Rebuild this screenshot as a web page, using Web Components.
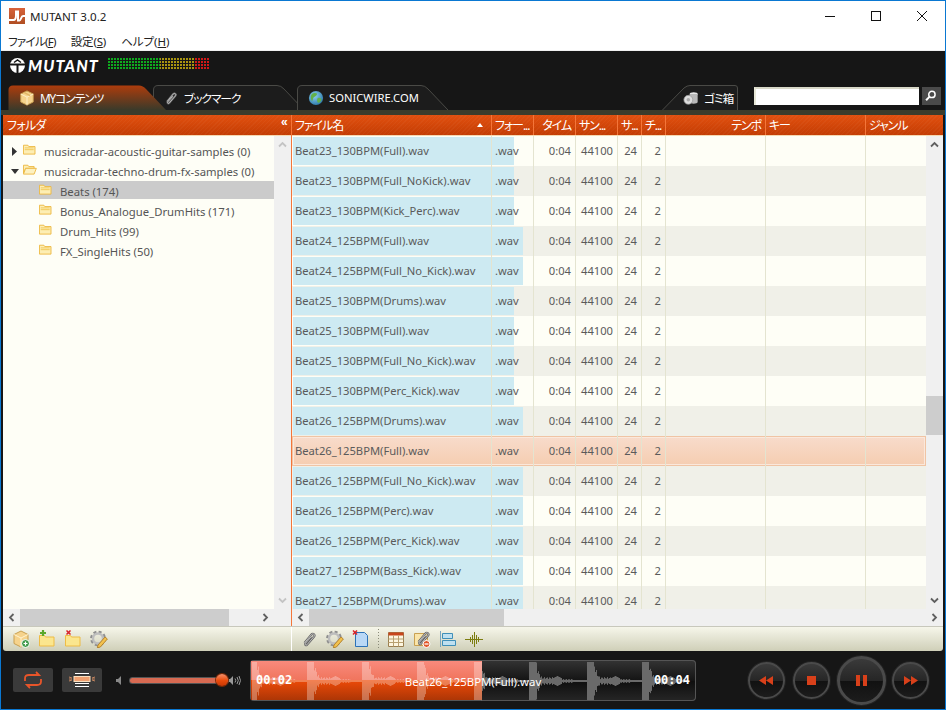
<!DOCTYPE html>
<html lang="ja">
<head>
<meta charset="utf-8">
<title>MUTANT 3.0.2</title>
<style>
  html, body { margin: 0; padding: 0; background: #161616; }
  body { font-family: "Noto Sans", "Noto Sans CJK JP", sans-serif; }
</style>
</head>
<body>
<mu-app></mu-app>
<script>
const FONT = `"Noto Sans", "Noto Sans CJK JP", sans-serif`;
// the kana in the reference are narrow, so squeeze them
const KANA = `font-feature-settings: "palt"; letter-spacing: -.7px;`;
const KANA_TIGHT = `font-feature-settings: "palt"; letter-spacing: -1.1px;`;

const FOLDER = `<path d="M.5 2.5h5l1 1.5h7v8.500H.5z" fill="#fdeeb4" stroke="#ecb63c"/><path d="M2 5.500h10M2 7.500h10" stroke="#f0c652" fill="none"/>`;
const GEAR = `<circle cx="8" cy="8.500" r="6.400" fill="none" stroke="#8e8e8e" stroke-width="3" stroke-dasharray="2.800 2.200"/><circle cx="8" cy="8.500" r="5" fill="none" stroke="#bdbdbd" stroke-width="2.400"/><path d="M8 15l7-8 2.400 2-7 8-3 .8z" fill="#f2c14e" stroke="#a8741a" stroke-width=".8"/>`;
const CLIP = `<path d="M4.500 13L11.500 4.500c1.600-1.800 4 .4 2.400 2.200L7 14.700c-1 1.100-2.600-.3-1.600-1.400l5.600-6.400" fill="none" stroke="#666" stroke-width="2.200"/><path d="M4.500 13L11.500 4.500c1.600-1.800 4 .4 2.400 2.200L7 14.700c-1 1.100-2.600-.3-1.600-1.400l5.600-6.400" fill="none" stroke="#e4e4e4" stroke-width=".7"/>`;
const ICONS = {
  box: `<path d="M9 1l7 3.500v9L9 17l-7-3.500v-9z" fill="#f6d38c" stroke="#c9a050"/><path d="M2 4.500L9 8l7-3.500M9 8v9" fill="none" stroke="#fff3d0"/><path d="M5.500 2.800l7 3.500" stroke="#e0b566" stroke-width="1.600"/>`,
  clip: CLIP,
  globe: `<defs><radialGradient id="g" cx=".4" cy=".35" r=".7"><stop offset="0" stop-color="#8fd0f0"/><stop offset="1" stop-color="#2a78a8"/></radialGradient></defs><circle cx="9" cy="9" r="8" fill="url(#g)"/><path d="M4 5c2-2 5-2 6-1s-1 3-3 4-1 3-2 4-3-4-1-7zM11 9c2-1 4 0 4 2s-3 4-4 3-1-4 0-5z" fill="#62b04a"/>`,
  trash: `<ellipse cx="12" cy="4.500" rx="4.500" ry="2" fill="#e8e8e8"/><path d="M7.500 4.500v9c0 2.600 9 2.600 9 0v-9" fill="#b9b9b9"/><circle cx="6" cy="11" r="5" fill="#dedede" stroke="#999" stroke-width=".8"/><circle cx="6" cy="11" r="2" fill="#aaa"/>`,
  search: `<circle cx="9.500" cy="6.500" r="3.800" fill="none" stroke="#fff" stroke-width="1.800"/><path d="M6.500 9.500L2.500 13.500" stroke="#fff" stroke-width="2.400"/>`,
  folder: FOLDER,
  open: `<path d="M.5 2.500h5l1 1.500h6v2H3L.5 11.500z" fill="#fdeeb4" stroke="#ecb63c"/><path d="M3 6h12l-2.500 6.500H.5z" fill="#fdf1c0" stroke="#ecb63c"/>`,
  boxadd: `<path d="M9 1l7 3.500v9L9 17l-7-3.500v-9z" fill="#f6d38c" stroke="#c9a050"/><path d="M2 4.500L9 8l7-3.500M9 8v9" fill="none" stroke="#fff3d0"/><circle cx="13.500" cy="13.500" r="4" fill="#3f9a4a" stroke="#fff"/><path d="M11.500 13.500h4M13.500 11.500v4" stroke="#fff" stroke-width="1.200"/>`,
  folderadd: `<path d="M1.500 5.500h5l1 1.500h8.500v9H1.500z" fill="#fbe68e" stroke="#eebc45"/><path d="M5 0v6M2 3h6" stroke="#5aa82c" stroke-width="2.200"/>`,
  folderdel: `<path d="M1.500 5.500h5l1 1.500h8.500v9H1.500z" fill="#fbe68e" stroke="#eebc45"/><path d="M2.500 .5l4 4M6.500 .5l-4 4" stroke="#d8232a" stroke-width="1.500"/>`,
  gear: GEAR,
  docdel: `<path d="M3.500 2.500h9l3 3v11h-12z" fill="#b9d8f6" stroke="#2c72b8"/><path d="M1 .5l4 4M5 .5l-4 4" stroke="#d8232a" stroke-width="1.500"/>`,
  table: `<path d="M1.500 2.500h15v14h-15z" fill="#fdf6e0" stroke="#9a7f50"/><path d="M1.500 2.500h15v3h-15z" fill="#c8451c"/><path d="M1.500 9h15M1.500 12.500h15M6.500 5.500v11M11.500 5.500v11" stroke="#b8a070" fill="none"/>`,
  clipdel: `<path d="M1.500 3.500h13v12h-13z" fill="#f9e4a8" stroke="#c9a050"/><g transform="translate(1 -1)">${CLIP}</g><circle cx="13.500" cy="14" r="3.500" fill="#e2562a" stroke="#fff"/><path d="M11.500 14h4" stroke="#fff" stroke-width="1.300"/>`,
  align: `<path d="M1.500 1v16" stroke="#7aa6c0"/><path d="M3.500 3.500h10v5h-10z" fill="#bfe0f0" stroke="#3f8fb8"/><path d="M3.500 10.500h13v5h-13z" fill="#bfe0f0" stroke="#3f8fb8"/>`,
  wave: `<path d="M0 9.500h18" stroke="#7d7d10"/><path d="M5.500 7v5M7.500 5v9M9.500 2v15M11.500 5v9M13.500 7v5" stroke="#7d7d10"/>`
};

class MuIcon extends HTMLElement {
  connectedCallback() {
    const size = this.getAttribute("size") || 18;
    this.attachShadow({ mode: "open" }).innerHTML = `
      <style>:host { display: block; width: ${size}px; height: ${size}px; flex: none; } svg { display: block; }</style>
      <svg width="${size}" height="${size}" viewBox="0 0 18 18">${ICONS[this.getAttribute("name")]}</svg>`;
  }
}
customElements.define("mu-icon", MuIcon);

class MuTitlebar extends HTMLElement {
  constructor() {
    super();
    this.attachShadow({ mode: "open" }).innerHTML = `
    <style>
      :host { display: flex; align-items: center; height: 30px; background: #fff; color: #222; font: 11.600px ${FONT}; }
      .logo { margin-left: 8px; width: 16px; height: 16px; }
      .name { margin-left: 5px; flex: 1; }
      .btn { width: 46px; height: 30px; display: flex; align-items: center; justify-content: center; }
    </style>
    <svg class="logo" viewBox="0 0 16 16"><defs><linearGradient id="l" x1="0" y1="0" x2="0" y2="1"><stop offset="0" stop-color="#d8623a"/><stop offset="1" stop-color="#b04e22"/></linearGradient></defs><rect width="16" height="16" fill="url(#l)"/><path d="M0 12H4.500C6 12 7 10 7 7V3.500H9V12.500H10.500C12 12.500 12 8 14 8H16" fill="none" stroke="#fff" stroke-width="2"/></svg>
    <span class="name">MUTANT 3.0.2</span>
    <div class="btn"><svg width="10" height="10"><path d="M0 5.500h10" stroke="#111"/></svg></div>
    <div class="btn"><svg width="10" height="10"><rect x=".5" y=".5" width="9" height="9" fill="none" stroke="#111"/></svg></div>
    <div class="btn"><svg width="10" height="10"><path d="M0 0l10 10M10 0L0 10" stroke="#111"/></svg></div>`;
  }
}
customElements.define("mu-titlebar", MuTitlebar);

class MuMenubar extends HTMLElement {
  constructor() {
    super();
    this.attachShadow({ mode: "open" }).innerHTML = `
    <style>
      :host { display: flex; gap: 15px; align-items: center; height: 20px; box-sizing: border-box; padding-left: 7px; background: #fff; border-bottom: 1px solid #f0f0f0; color: #222; font: 11.500px ${FONT}; ${KANA} }
      .s { letter-spacing: -.2px; }
      .h { letter-spacing: 0; }
    </style>
    <span>ファイル(<u>F</u>)</span><span class="s">設定(<u>S</u>)</span><span class="h">ヘルプ(<u>H</u>)</span>`;
  }
}
customElements.define("mu-menubar", MuMenubar);

class MuBrand extends HTMLElement {
  constructor() {
    super();
    this.attachShadow({ mode: "open" }).innerHTML = `
    <style>
      :host { display: flex; align-items: flex-start; height: 34px; padding: 7px 0 0 9px; box-sizing: border-box; }
      svg { width: 15px; height: 15px; }
      .word { margin-left: 3px; width: 72px; color: #fff; font: italic 900 16px/15px Lato, sans-serif; letter-spacing: 1.100px; white-space: nowrap; }
      .meter { margin-left: 8px; width: 102px; height: 12px;
        background:
          repeating-linear-gradient(90deg, transparent 0 2px, #161616 2px 3px),
          repeating-linear-gradient(180deg, transparent 0 2px, #161616 2px 3px),
          linear-gradient(90deg, #0ea81e 0 52px, #a89410 52px 87px, #d01818 87px);
      }
    </style>
    <svg viewBox="0 0 15 15"><circle cx="7.500" cy="7.500" r="7.500" fill="#fff"/><path d="M0 6.500h15M7.500 6v9" stroke="#161616" stroke-width="2"/><path d="M4 4.500l3.500-2.500 3.500 2.500" stroke="#161616" stroke-width="1.500" fill="none"/></svg>
    <span class="word">MUTANT</span>
    <div class="meter"></div>`;
  }
}
customElements.define("mu-brand", MuBrand);

class MuTab extends HTMLElement {
  connectedCallback() {
    const w = +this.getAttribute("width");
    const active = this.hasAttribute("active");
    const left = this.hasAttribute("slant-left");
    const latin = this.hasAttribute("latin");
    const d = left
      ? `M.5 25L22 3Q25 .5 28 .5H${w - 3}Q${w - .5} .5 ${w - .5} 3V25`
      : `M.5 25V5Q.5 .5 5 .5H${w - 28}Q${w - 24} .5 ${w - 21} 4L${w - 1} 25`;
    this.attachShadow({ mode: "open" }).innerHTML = `
    <style>
      :host { display: flex; position: relative; align-items: center; gap: 5px; box-sizing: border-box; width: ${w}px; height: 25px; white-space: nowrap;
        padding-left: ${this.getAttribute("pad") || 11}px; color: #fff; z-index: ${active ? 3 : 1};
        ${latin ? `font: 11.200px ${FONT};` : `font: 11.800px ${FONT}; ${KANA_TIGHT}`} }
      svg { position: absolute; left: 0; top: 0; z-index: -1; }
    </style>
    <svg width="${w}" height="25">
      <defs><linearGradient id="a" x1="0" y1="0" x2="0" y2="1"><stop offset="0" stop-color="#ad3c0c"/><stop offset="1" stop-color="#3a3a2a"/></linearGradient></defs>
      <path d="${d}${active ? "Z" : ""}" fill="${active ? "url(#a)" : "#1c1c1c"}" stroke="${active ? "none" : "#4a4a46"}"/>
    </svg>
    <mu-icon name="${this.getAttribute("icon")}" size="16"></mu-icon><slot></slot>`;
  }
}
customElements.define("mu-tab", MuTab);

class MuTabs extends HTMLElement {
  constructor() {
    super();
    this.attachShadow({ mode: "open" }).innerHTML = `
    <style>
      :host { display: flex; height: 25px; padding-left: 7px; }
      .t2 { margin-left: -14px; }
      .t3 { margin-left: -8px; }
      .t4 { margin-left: auto; }
      .search { margin: 2px 0 0 16px; display: flex; gap: 3px; height: 18px; padding-right: 4px; }
      .input { width: 165px; height: 18px; box-sizing: border-box; background: #fff; border-top: 2px solid #d8d8c8; border-left: 2px solid #e8e8d8; }
      .go { width: 19px; height: 18px; background: #4a4a4a; display: flex; align-items: center; justify-content: center; }
    </style>
    <mu-tab active width="159" icon="box">MYコンテンツ</mu-tab>
    <mu-tab class="t2" width="152" icon="clip" pad="10">ブックマーク</mu-tab>
    <mu-tab class="t3" width="152" icon="globe" latin>SONICWIRE.COM</mu-tab>
    <mu-tab class="t4" slant-left width="76" icon="trash" pad="21">ゴミ箱</mu-tab>
    <div class="search">
      <div class="input"></div>
      <div class="go"><mu-icon name="search" size="15"></mu-icon></div>
    </div>`;
  }
}
customElements.define("mu-tabs", MuTabs);

class MuScrollbar extends HTMLElement {
  connectedCallback() {
    const v = this.hasAttribute("vertical");
    const chev = (dir, col) => {
      const rot = { left: 0, up: 90, right: 180, down: 270 }[dir];
      return `<svg width="9" height="9" viewBox="0 0 9 9" style="transform:rotate(${rot}deg)"><path d="M6.500 1L3 4.500 6.500 8" fill="none" stroke="${col}" stroke-width="1.800"/></svg>`;
    };
    const col = this.getAttribute("arrow") || "#606060";
    const start = +this.getAttribute("start") || 0;
    const size = +this.getAttribute("size") || 0;
    const thumb = size ? `<div class="thumb" style="${v ? `margin-top:${start}px;height:${size}px` : `margin-left:${start}px;width:${size}px`}"></div>` : "";
    this.attachShadow({ mode: "open" }).innerHTML = `
    <style>
      :host { display: flex; flex-direction: ${v ? "column" : "row"}; background: #f0f0f0; flex: none; ${v ? "width: 17px;" : "height: 17px;"} }
      .arrow { flex: none; width: 17px; height: 17px; display: flex; align-items: center; justify-content: center; }
      .track { flex: 1; display: flex; min-width: 0; min-height: 0; flex-direction: ${v ? "column" : "row"}; }
      .thumb { background: #cdcdcd; flex: none; }
      .corner { flex: none; width: ${this.getAttribute("corner") || 0}px; }
    </style>
    <div class="arrow">${chev(v ? "up" : "left", col)}</div>
    <div class="track">${thumb}</div>
    <div class="arrow">${chev(v ? "down" : "right", col)}</div>
    <div class="corner"></div>`;
  }
}
customElements.define("mu-scrollbar", MuScrollbar);

class MuHeadCell extends HTMLElement {
  constructor() {
    super();
    this.attachShadow({ mode: "open" }).innerHTML = `
    <style>
      :host { display: flex; align-items: center; box-sizing: border-box; min-width: 0; padding: 0 0 0 3px; height: 20px;
        border-right: 1px solid #f4763a; white-space: nowrap; }
      :host([end]) { justify-content: flex-end; padding-right: 4px; }
      :host([last]) { border-right: 0; }
    </style>
    <slot></slot>`;
  }
}
customElements.define("mu-head-cell", MuHeadCell);

const HEAD_BG = `repeating-linear-gradient(135deg, rgba(255,255,255,.03) 0 1px, transparent 1px 3px), linear-gradient(#e2500f, #c43d04)`;

class MuTree extends HTMLElement {
  constructor() {
    super();
    this.attachShadow({ mode: "open" }).innerHTML = `
    <style>
      :host { display: flex; flex-direction: column; width: 289px; flex: none; border-right: 1px solid #f4763a; box-sizing: border-box; }
      .head { display: flex; align-items: center; justify-content: space-between; height: 20px; padding: 0 4px; color: #fff; font: 12px ${FONT}; ${KANA} background: ${HEAD_BG}; border-bottom: 1px solid #f5d8b0; }
      .chev { font: bold 12px/12px "Liberation Sans", sans-serif; position: relative; top: -3px; }
      .mid { flex: 1; display: flex; min-height: 0; }
      .list { flex: 1; background: #fefef6; padding-top: 5px; }
    </style>
    <div class="head"><span>フォルダ</span><span class="chev">«</span></div>
    <div class="mid">
      <div class="list">
        <mu-tree-item arrow="right" icon="folder">musicradar-acoustic-guitar-samples (0)</mu-tree-item>
        <mu-tree-item arrow="down" icon="open">musicradar-techno-drum-fx-samples (0)</mu-tree-item>
        <mu-tree-item child selected icon="folder">Beats (174)</mu-tree-item>
        <mu-tree-item child icon="folder">Bonus_Analogue_DrumHits (171)</mu-tree-item>
        <mu-tree-item child icon="folder">Drum_Hits (99)</mu-tree-item>
        <mu-tree-item child icon="folder">FX_SingleHits (50)</mu-tree-item>
      </div>
      <mu-scrollbar vertical arrow="#c4c4c4"></mu-scrollbar>
    </div>
    <mu-scrollbar start="0" size="209" corner="17"></mu-scrollbar>`;
  }
}
customElements.define("mu-tree", MuTree);

class MuTreeItem extends HTMLElement {
  connectedCallback() {
    const arrow = this.getAttribute("arrow");
    const tri = arrow === "right" ? `<path d="M1 0l5 4.500-5 4.500z" fill="#333"/>` : arrow === "down" ? `<path d="M0 2h8L4 7z" fill="#333"/>` : "";
    this.attachShadow({ mode: "open" }).innerHTML = `
    <style>
      :host { display: flex; align-items: center; height: 20px; box-sizing: border-box; padding-left: 8px; color: #555; font: 11.300px ${FONT}; white-space: nowrap; }
      :host([child]) { padding-left: 36px; }
      :host([selected]) { background: linear-gradient(#cbcbcb, #cbcbcb) 0 0 / 100% 18px no-repeat; }
      .tri { width: 8px; height: 9px; margin-right: 4px; }
      mu-icon { margin-right: 5px; }
    </style>
    ${arrow ? `<svg class="tri" viewBox="0 0 8 9">${tri}</svg>` : ""}
    <mu-icon name="${this.getAttribute("icon")}" size="16"></mu-icon><slot></slot>`;
  }
}
customElements.define("mu-tree-item", MuTreeItem);

const COLS = "200px 42px 42px 42px 24px 24px 100px 100px";

class MuFileRow extends HTMLElement {
  connectedCallback() {
    const bar = this.getAttribute("bar");
    this.attachShadow({ mode: "open" }).innerHTML = `
    <style>
      :host { display: grid; grid-template-columns: ${COLS} 1fr; height: 30px; box-sizing: border-box; background: #fefef6; color: #5a5a5a; font: 11.200px/30px ${FONT}; white-space: nowrap; }
      :host([alt]) { background-color: #f0f0e8; }
      :host([bar]) { background-image: linear-gradient(#cdeaf2, #cdeaf2); background-size: ${bar}px 28px; background-position: 1px 1px; background-repeat: no-repeat; }
      :host([current]) { background: linear-gradient(#f8dccc, #f5cdb0); box-shadow: inset 0 0 0 1px #f0c4a4, inset 0 0 0 2px #fae8dc; }
      div { border-right: 1px solid #e4e4d0; padding: 0 3px; overflow: hidden; }
      .r { text-align: right; padding-right: 4px; }
    </style>
    <div>${this.getAttribute("name")}.wav</div><div>.wav</div><div class="r">0:04</div><div class="r">44100</div><div class="r">24</div><div class="r">2</div><div></div><div></div><div style="border:0"></div>`;
  }
}
customElements.define("mu-file-row", MuFileRow);

const FILES = [
  "Beat23_130BPM(Full)", "Beat23_130BPM(Full_NoKick)", "Beat23_130BPM(Kick_Perc)",
  "Beat24_125BPM(Full)", "Beat24_125BPM(Full_No_Kick)", "Beat25_130BPM(Drums)",
  "Beat25_130BPM(Full)", "Beat25_130BPM(Full_No_Kick)", "Beat25_130BPM(Perc_Kick)",
  "Beat26_125BPM(Drums)", "Beat26_125BPM(Full)", "Beat26_125BPM(Full_No_Kick)",
  "Beat26_125BPM(Perc)", "Beat26_125BPM(Perc_Kick)", "Beat27_125BPM(Bass_Kick)",
  "Beat27_125BPM(Drums)"
];

class MuFileTable extends HTMLElement {
  constructor() {
    super();
    const rows = FILES.map((f, i) => {
      const current = i === 10;
      const bar = f.includes("130BPM") ? 221 : 230;
      return `<mu-file-row name="${f}" ${i % 2 ? "alt" : ""} ${current ? "current" : `bar="${bar}"`}></mu-file-row>`;
    }).join("");
    this.attachShadow({ mode: "open" }).innerHTML = `
    <style>
      :host { display: flex; flex-direction: column; flex: 1; min-width: 0; }
      .head { display: grid; grid-template-columns: ${COLS} 1fr; height: 20px; color: #fff; font: 12px ${FONT}; ${KANA_TIGHT} background: ${HEAD_BG}; border-bottom: 1px solid #f5d8b0; }
      .sort { margin-left: auto; margin-right: 8px; width: 0; height: 0; border: 3px solid transparent; border-top: 0; border-bottom: 4px solid #fff; }
      .mid { flex: 1; display: flex; min-height: 0; }
      .rows { flex: 1; min-width: 0; overflow: hidden; background: #fefef6; }
    </style>
    <div class="head">
      <mu-head-cell><span>ファイル名</span><i class="sort"></i></mu-head-cell>
      <mu-head-cell>フォー...</mu-head-cell>
      <mu-head-cell end>タイム</mu-head-cell>
      <mu-head-cell>サン...</mu-head-cell>
      <mu-head-cell>サ...</mu-head-cell>
      <mu-head-cell>チ...</mu-head-cell>
      <mu-head-cell end>テンポ</mu-head-cell>
      <mu-head-cell>キー</mu-head-cell>
      <mu-head-cell last>ジャンル</mu-head-cell>
    </div>
    <div class="mid">
      <div class="rows">${rows}</div>
      <mu-scrollbar vertical start="243" size="39"></mu-scrollbar>
    </div>
    <mu-scrollbar start="0" size="195"></mu-scrollbar>`;
  }
}
customElements.define("mu-file-table", MuFileTable);

class MuToolbar extends HTMLElement {
  constructor() {
    super();
    const set = names => names.map(n => `<mu-icon name="${n}" size="18"></mu-icon>`).join("");
    this.attachShadow({ mode: "open" }).innerHTML = `
    <style>
      :host { display: flex; height: 25px; box-sizing: border-box; border-top: 1px solid #c8c8bc; border-radius: 0 0 3px 3px; background: linear-gradient(#f6f6ea, #cfcfb8); }
      .group { display: flex; align-items: center; gap: 8px; }
      .a { width: 289px; padding-left: 9px; box-sizing: border-box; border-right: 1px solid #fff; }
      .b { padding-left: 8px; }
      .dots { width: 1px; height: 20px; background: repeating-linear-gradient(#8a8a78 0 1px, transparent 1px 3px); }
    </style>
    <div class="group a">${set(["boxadd", "folderadd", "folderdel", "gear"])}</div>
    <div class="group b">${set(["clip", "gear", "docdel"])}<div class="dots"></div>${set(["table", "clipdel", "align", "wave"])}</div>`;
  }
}
customElements.define("mu-toolbar", MuToolbar);

class MuWaveform extends HTMLElement {
  constructor() {
    super();
    const W = 446, H = 41, mid = 21, split = 232;
    const env = new Array(W).fill(0);
    const beats = [2, 57, 112, 167, 224, 279, 337, 392];
    beats.forEach((b, n) => {
      const full = n === 0 ? 5 : 7;
      for (let t = 0; t < 58; t++) {
        const x = b + t;
        if (x >= W - 8) break;
        const jag = 1 + .3 * Math.sin(t * 2.3 + n);
        let h = 1;
        if (t < full) h = 19;
        else if (t < 14) h = 15 * Math.exp(-(t - full) / 3.500) * jag;
        else if (t < 24) h = 3 * jag;
        else if (t < 33) h = 5 - Math.abs(t - 28) * .5;
        else if (t < 44) h = 1.500 * jag;
        env[x] = Math.max(env[x], h);
      }
    });
    let played = "", rest = "";
    env.forEach((h, x) => {
      if (!h) return;
      const seg = `M${x}.5 ${(mid - h).toFixed(1)}V${(mid + h).toFixed(1)}`;
      if (x < split) played += seg; else rest += seg;
    });
    this.attachShadow({ mode: "open" }).innerHTML = `
    <style>
      :host { display: block; position: relative; width: ${W}px; height: ${H}px; border-radius: 4px; overflow: hidden; box-shadow: inset 0 0 0 1px #555;
        background: linear-gradient(#343434, #141414 50%, #0e0e0e 50%, #262626); font: 11.400px ${FONT}; color: #fff; }
      .played { position: absolute; left: 1px; top: 1px; bottom: 1px; width: ${split - 1}px;
        background: linear-gradient(#f98a7c, #f0745c 50%, #ec4a08 50%, #ad3606); }
      svg { position: absolute; left: 0; top: 0; }
      .row { position: absolute; inset: 0; display: flex; align-items: center; padding: 0 6px; }
      .time { font: bold 12px "DejaVu Sans Mono", monospace; }
      .title { flex: 1; text-align: center; padding-top: 2px; }
    </style>
    <div class="played"></div>
    <svg width="${W}" height="${H}">
      <path d="${played}" stroke="rgba(255,255,255,.3)"/>
      <path d="${rest}" stroke="#6a6a6a"/>
    </svg>
    <div class="row"><span class="time">00:02</span><span class="title"><slot></slot></span><span class="time">00:04</span></div>`;
  }
}
customElements.define("mu-waveform", MuWaveform);

class MuTransport extends HTMLElement {
  connectedCallback() {
    const big = this.hasAttribute("big");
    const glyphs = {
      prev: `<path d="M7 3L0 7.500 7 12zM14 3L7 7.500 14 12z"/>`,
      stop: `<rect x="3" y="3" width="9" height="9"/>`,
      pause: `<rect x="2" y="2" width="4" height="11"/><rect x="9" y="2" width="4" height="11"/>`,
      next: `<path d="M1 3l7 4.500L1 12zM8 3l7 4.500L8 12z"/>`
    };
    this.attachShadow({ mode: "open" }).innerHTML = `
    <style>
      :host { display: flex; align-items: center; justify-content: center; flex: none; box-sizing: border-box;
        width: ${big ? 49 : 37}px; height: ${big ? 49 : 37}px; border-radius: 50%;
        border: ${big ? 3 : 2}px solid #4a4a4a; box-shadow: 0 0 0 1px #222;
        background: linear-gradient(#3a3a3a, #262626 50%, #111 50%, #1c1c1c); }
      svg { fill: #d8401a; }
    </style>
    <svg width="15" height="15" viewBox="0 0 15 15">${glyphs[this.getAttribute("kind")]}</svg>`;
  }
}
customElements.define("mu-transport", MuTransport);

class MuPlayer extends HTMLElement {
  constructor() {
    super();
    this.attachShadow({ mode: "open" }).innerHTML = `
    <style>
      :host { display: flex; align-items: center; height: 58px; padding-left: 12px; color: #fff; }
      .btn { width: 40px; height: 24px; border-radius: 2px; background: #3a3a3a; display: flex; align-items: center; justify-content: center; }
      .btn + .btn { margin-left: 9px; }
      .vol { margin-left: 14px; width: 6px; height: 9px; }
      .slider { position: relative; margin-left: 8px; width: 98px; height: 5px; border-radius: 3px; background: #d86a52; box-shadow: 0 0 0 1px #555; }
      .knob { position: absolute; right: 0; top: -3.500px; width: 12px; height: 12px; border-radius: 50%; background: linear-gradient(#f8906a, #e84a0a 55%, #c83804); box-shadow: 0 0 0 1px #7a2a08; }
      .loud { width: 13px; height: 11px; }
      mu-waveform { margin-left: 9px; }
      .transport { display: flex; align-items: center; margin-left: 52px; }
      .transport :nth-child(2) { margin-left: 8px; }
      .transport :nth-child(3) { margin-left: 7px; }
      .transport :nth-child(4) { margin-left: 6px; }
    </style>
    <div class="btn"><svg width="24" height="18" viewBox="0 0 22 18" fill="none" stroke="#e8552a" stroke-width="1.800"><path d="M3 10V7.500Q3 4 7 4h10l-3-3M19 8v2.500Q19 14 15 14H5l3 3"/></svg></div>
    <div class="btn"><svg width="28" height="16" viewBox="0 0 28 16"><path d="M7 1.500h14M7 11.500h14M7 14.500h14" stroke="#fff"/><rect x="6" y="4.500" width="16" height="5" fill="#f0a070" stroke="#fbe0c0"/><path d="M1 5l3 1M1 7h3M1 9l3-1M24 6l3-1M24 7h3M24 8l3 1" stroke="#e89868" stroke-width=".8"/></svg></div>
    <svg class="vol" viewBox="0 0 6 9"><path d="M0 3h2l3-3v9L2 6H0z" fill="#888"/></svg>
    <div class="slider"><div class="knob"></div></div>
    <svg class="loud" viewBox="0 0 13 11"><path d="M0 4h2l3-3v9L2 7H0z" fill="#999"/><path d="M7 3.500q1.500 2 0 4M9 2q2.500 3.500 0 7M11 1q3 4.500 0 9" fill="none" stroke="#999"/></svg>
    <mu-waveform>Beat26_125BPM(Full).wav</mu-waveform>
    <div class="transport">
      <mu-transport kind="prev"></mu-transport>
      <mu-transport kind="stop"></mu-transport>
      <mu-transport kind="pause" big></mu-transport>
      <mu-transport kind="next"></mu-transport>
    </div>`;
  }
}
customElements.define("mu-player", MuPlayer);

class MuApp extends HTMLElement {
  constructor() {
    super();
    this.attachShadow({ mode: "open" }).innerHTML = `
    <style>
      :host { display: flex; flex-direction: column; width: 946px; height: 710px; box-sizing: border-box; border: 1px solid #0a78d2; background: #161616; overflow: hidden; }
      .body { flex: 1; display: flex; flex-direction: column; min-height: 0; }
      .rule { height: 5px; background: #3c3c2c; }
      .panels { flex: 1; display: flex; min-height: 0; margin: 0 2px; }
      mu-toolbar { margin: 0 2px; }
    </style>
    <mu-titlebar></mu-titlebar>
    <mu-menubar></mu-menubar>
    <div class="body">
      <mu-brand></mu-brand>
      <mu-tabs></mu-tabs>
      <div class="rule"></div>
      <div class="panels"><mu-tree></mu-tree><mu-file-table></mu-file-table></div>
      <mu-toolbar></mu-toolbar>
      <mu-player></mu-player>
    </div>`;
  }
}
customElements.define("mu-app", MuApp);
</script>
</body>
</html>
